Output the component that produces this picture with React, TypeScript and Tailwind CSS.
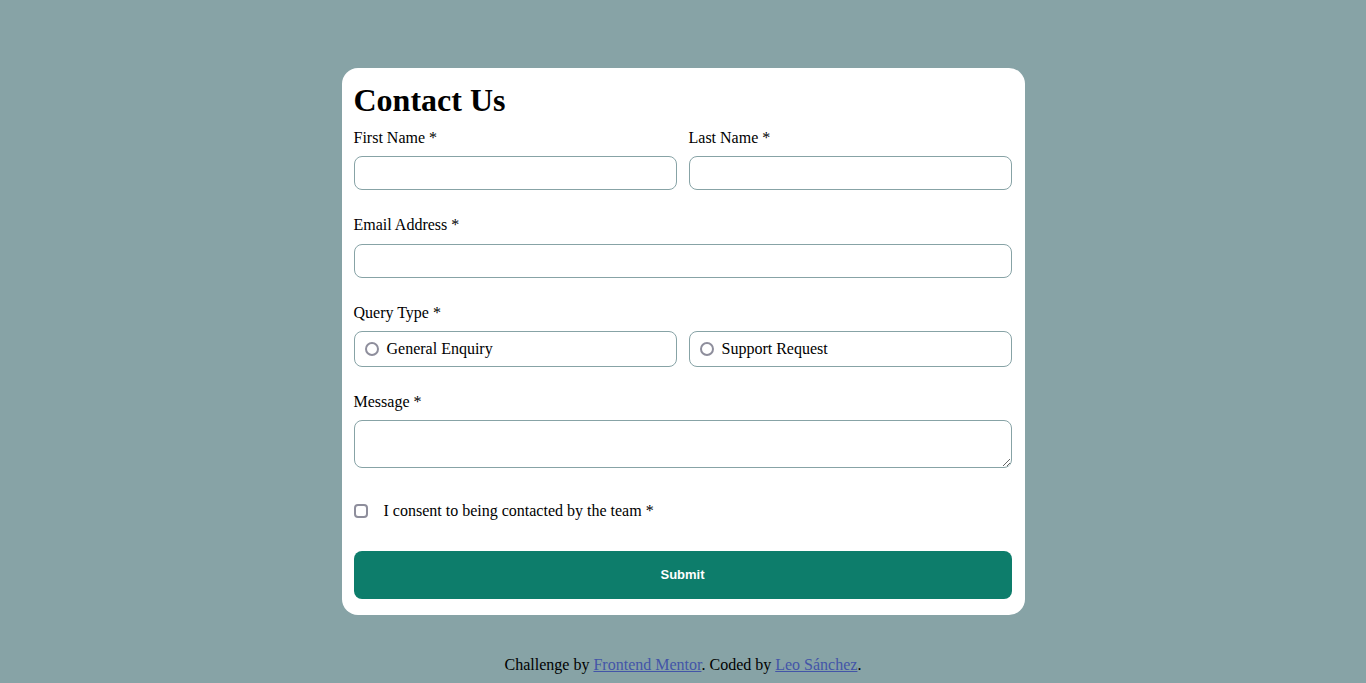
export default function App() {
  return (
    <div className="min-h-screen bg-[#87a3a6] flex flex-col items-center pt-[68px] font-['Liberation_Serif',serif] text-black text-base">
      <form
        className="w-[683px] bg-white rounded-2xl pl-3 pr-[13px] pt-3 pb-4"
        onSubmit={(e) => e.preventDefault()}
      >
        <h1 className="mt-0.5 text-[32px] leading-9 font-bold">Contact Us</h1>

        <div className="grid grid-cols-2 gap-3 mt-2">
          <Field label="First Name *" />
          <Field label="Last Name *" />
        </div>

        <div className="mt-[23px]">
          <label className="block leading-6 mb-[7px]">Email Address *</label>
          <input type="email" className="block w-full h-[34px] rounded-lg border border-[#87a3a6] px-3" />
        </div>

        <div className="mt-[23px]">
          <p className="leading-6 mb-1.5">Query Type *</p>
          <div className="grid grid-cols-2 gap-3">
            {["General Enquiry", "Support Request"].map((q) => (
              <label key={q} className="flex items-center gap-2 h-9 pl-[10px] rounded-lg border border-[#87a3a6] cursor-pointer">
                <input
                  type="radio"
                  name="query"
                  className="appearance-none w-[14px] h-[14px] rounded-full border-2 border-[#8e8e9c] checked:border-[#0d7d6b] checked:border-4"
                />
                <span>{q}</span>
              </label>
            ))}
          </div>
        </div>

        <div className="mt-[23px]">
          <label className="block leading-6 mb-1.5">Message *</label>
          <textarea className="block w-full h-12 rounded-lg border border-[#87a3a6] px-3 py-1" />
        </div>

        <label className="flex items-center gap-4 mt-[31px] leading-6 cursor-pointer">
          <input
            type="checkbox"
            className="appearance-none w-[14px] h-[14px] rounded-sm border-2 border-[#8e8e9c] checked:bg-[#0d7d6b] checked:border-[#0d7d6b]"
          />
          <span>I consent to being contacted by the team *</span>
        </label>

        <button
          type="submit"
          className="block w-full h-12 mt-7 rounded-lg bg-[#0d7d6b] text-white text-[13px] font-bold font-['Liberation_Sans',Arial,sans-serif]"
        >
          Submit
        </button>
      </form>

      <p className="mt-[38px] leading-6">
        Challenge by <a href="#" className="underline text-[#4355a8]">Frontend Mentor</a>. Coded by{" "}
        <a href="#" className="underline text-[#4355a8]">Leo Sánchez</a>.
      </p>
    </div>
  );
}

function Field({ label }: { label: string }) {
  return (
    <div>
      <label className="block leading-6 mb-1.5">{label}</label>
      <input type="text" className="block w-full h-[34px] rounded-lg border border-[#87a3a6] px-3" />
    </div>
  );
}
